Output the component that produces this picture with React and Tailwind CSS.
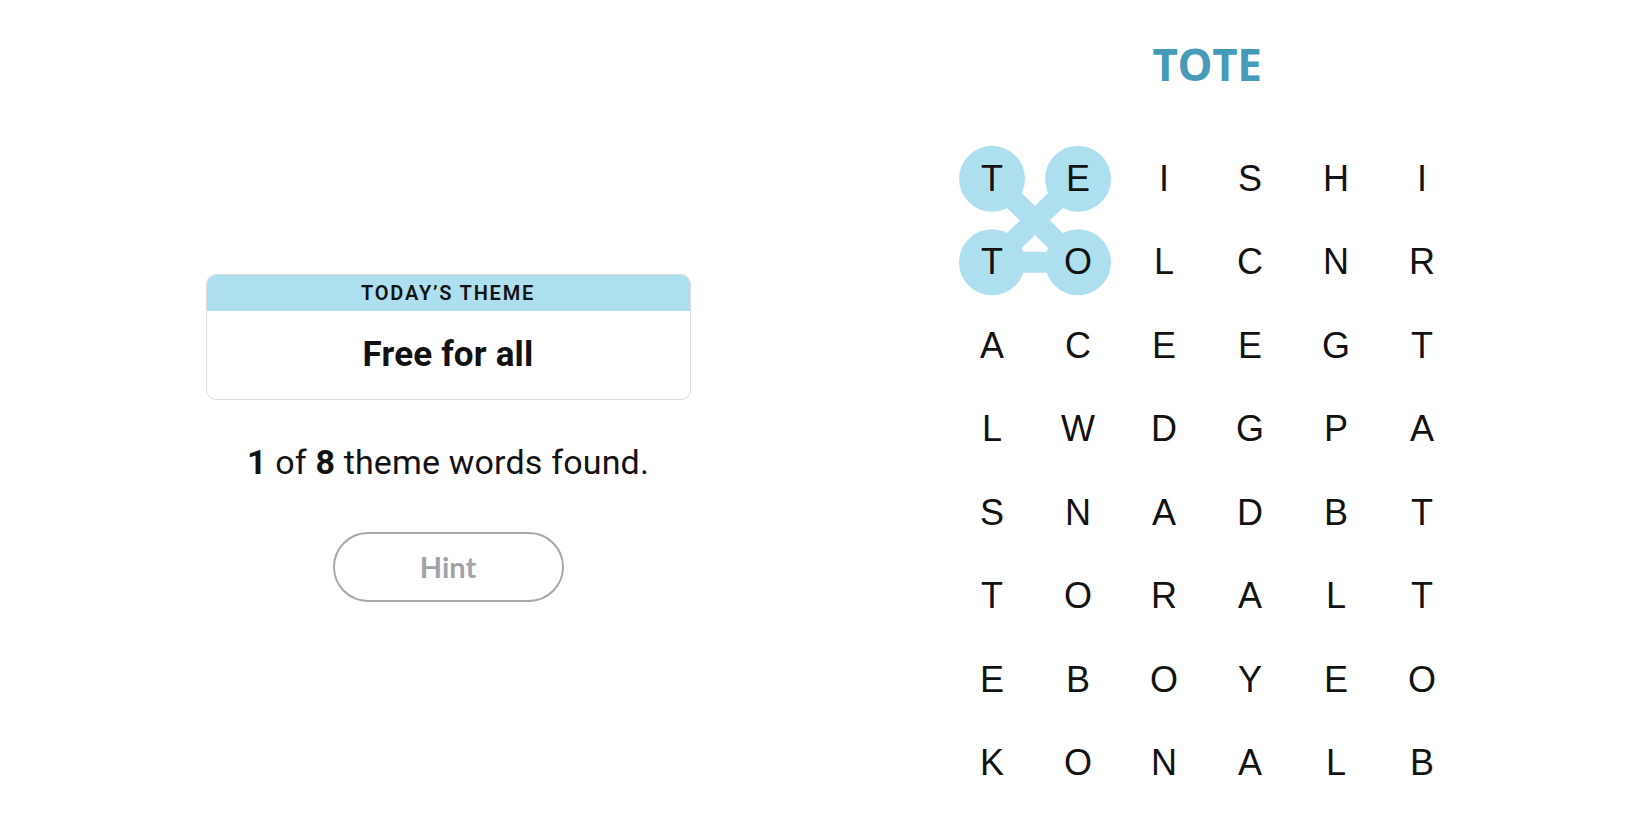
import React from "react";

const letters = [
  "TEISHI",
  "TOLCNR",
  "ACEEGT",
  "LWDGPA",
  "SNADBT",
  "TORALT",
  "EBOYEO",
  "KONALB",
];

const CW = 86;
const RH = 83.5;
const cx = (c) => CW / 2 + c * CW;
const cy = (r) => RH / 2 + r * RH;

// found word path: T(0,0) -> O(1,1) -> T(1,0) -> E(0,1)
const found = [
  [0, 0],
  [1, 1],
  [1, 0],
  [0, 1],
];

function Board() {
  const pts = found.map(([r, c]) => `${cx(c)},${cy(r)}`).join(" ");
  return (
    <div className="relative">
      <svg className="absolute inset-0" width={CW * 6} height={RH * 8}>
        <polyline points={pts} fill="none" stroke="#aedfee" strokeWidth="21" strokeLinejoin="round" />
        {found.map(([r, c]) => (
          <circle key={`${r}-${c}`} cx={cx(c)} cy={cy(r)} r="33" fill="#aedfee" />
        ))}
      </svg>
      <div className="relative grid grid-cols-[repeat(6,86px)] grid-rows-[repeat(8,83.5px)]">
        {letters.map((row, r) =>
          row.split("").map((ch, c) => (
            <div
              key={`${r}-${c}`}
              className="flex items-center justify-center text-[36px] text-[#121212] font-['Liberation_Sans',Arial,sans-serif]"
            >
              {ch}
            </div>
          ))
        )}
      </div>
    </div>
  );
}

export default function App() {
  return (
    <div className="flex w-full h-[825px] bg-white overflow-hidden">
      <div className="w-[896px] flex flex-col items-center pt-[274px]">
        <div className="w-[485px] rounded-[10px] border border-[#dcdcdc] overflow-hidden">
          <div className="h-[36px] bg-[#aedfee] flex items-center justify-center text-[20px] font-semibold tracking-[0.09em] text-[#121212] font-['Roboto',sans-serif]">
            TODAY’S THEME
          </div>
          <div className="h-[88px] flex items-center justify-center text-[35px] font-bold tracking-[0.005em] text-[#121212] font-['Roboto',sans-serif]">
            Free for all
          </div>
        </div>
        <p className="mt-[40px] text-[34px] leading-[44px] tracking-[0.005em] text-[#121212] font-['Roboto',sans-serif]">
          <span className="font-bold">1</span> of <span className="font-bold">8</span> theme words found.
        </p>
        <button className="mt-[48px] w-[231px] h-[70px] rounded-full border-2 border-[#a8a8a8] text-[29px] font-bold text-[#a0a4aa] font-['Lato',sans-serif]">
          Hint
        </button>
      </div>
      <div className="w-[622px] flex flex-col items-center">
        <h1 className="mt-[42px] text-[44px] leading-none font-bold tracking-[-0.01em] text-[#469bbb] font-['Open_Sans',sans-serif]">
          TOTE
        </h1>
        <div className="mt-[51px]">
          <Board />
        </div>
      </div>
    </div>
  );
}
